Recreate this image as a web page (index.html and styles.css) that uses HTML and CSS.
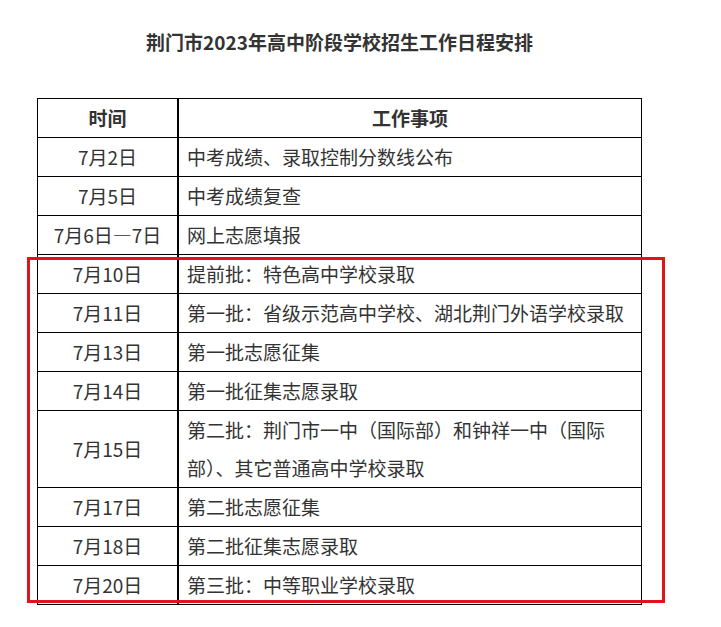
FILE: index.html
```html
<!DOCTYPE html>
<html lang="zh-CN">
<head>
<meta charset="utf-8">
<title>荆门市2023年高中阶段学校招生工作日程安排</title>
<link rel="stylesheet" href="styles.css">
</head>
<body>
<div class="page">
  <h1 class="title">荆门市2023年高中阶段学校招生工作日程安排</h1>
  <div class="table-wrap">
    <table class="schedule">
      <thead>
        <tr><th class="c-time">时间</th><th class="c-item">工作事项</th></tr>
      </thead>
      <tbody>
        <tr><td class="c-time">7月2日</td><td class="c-item">中考成绩、录取控制分数线公布</td></tr>
        <tr><td class="c-time">7月5日</td><td class="c-item">中考成绩复查</td></tr>
        <tr><td class="c-time">7月6日—7日</td><td class="c-item">网上志愿填报</td></tr>
        <tr><td class="c-time">7月10日</td><td class="c-item">提前批：特色高中学校录取</td></tr>
        <tr><td class="c-time">7月11日</td><td class="c-item">第一批：省级示范高中学校、湖北荆门外语学校录取</td></tr>
        <tr><td class="c-time">7月13日</td><td class="c-item">第一批志愿征集</td></tr>
        <tr><td class="c-time">7月14日</td><td class="c-item">第一批征集志愿录取</td></tr>
        <tr><td class="c-time">7月15日</td><td class="c-item">第二批：荆门市一中（国际部）和钟祥一中（国际部）、其它普通高中学校录取</td></tr>
        <tr><td class="c-time">7月17日</td><td class="c-item">第二批志愿征集</td></tr>
        <tr><td class="c-time">7月18日</td><td class="c-item">第二批征集志愿录取</td></tr>
        <tr><td class="c-time">7月20日</td><td class="c-item">第三批：中等职业学校录取</td></tr>
      </tbody>
    </table>
    <div class="highlight"></div>
  </div>
</div>
</body>
</html>
```

FILE: styles.css
```css
html, body {
  margin: 0;
  padding: 0;
  background: #fff;
}
body {
  font-family: "Noto Sans CJK SC", "Liberation Sans", sans-serif;
  color: #333;
}
.page {
  width: 605px;
  margin-left: 37px;
  padding-top: 29px;
}
.title {
  margin: 0;
  font-size: 19px;
  line-height: 26px;
  font-weight: bold;
  text-align: center;
  color: #333;
}
.table-wrap {
  position: relative;
  margin-top: 43px;
}
.schedule {
  width: 605px;
  border-collapse: collapse;
  table-layout: fixed;
  font-size: 19px;
  line-height: 38px;
}
.schedule th,
.schedule td {
  border: 1px solid #000;
  padding: 0 8px;
  color: #333;
  font-weight: normal;
}
.schedule th {
  font-weight: bold;
  text-align: center;
}
.schedule .c-time {
  width: 123px;
  text-align: center;
  border-right: 2px solid #000;
}
.schedule td.c-item {
  text-align: left;
}
.highlight {
  position: absolute;
  left: -10px;
  top: 159px;
  width: 632px;
  height: 340px;
  border: 3px solid #e3131b;
  pointer-events: none;
}
```
